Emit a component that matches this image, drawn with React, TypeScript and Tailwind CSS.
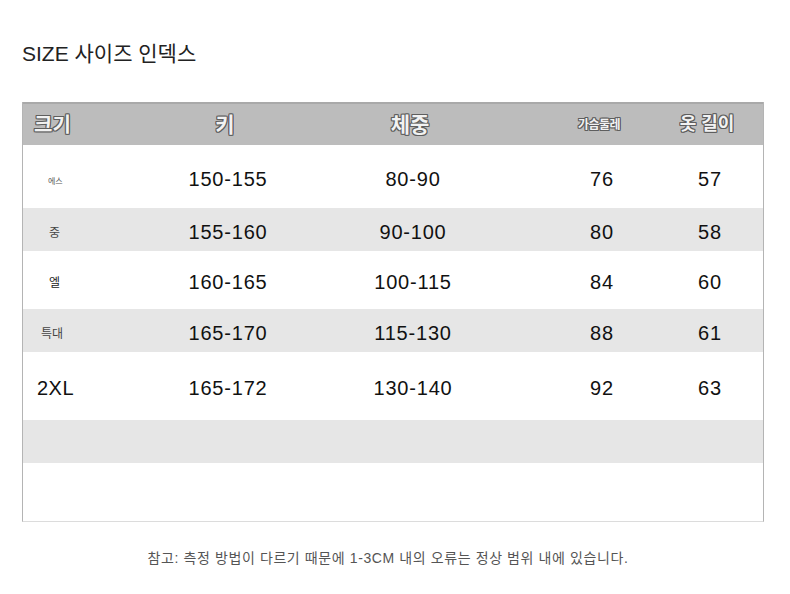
import React from "react";

const font = "font-['Liberation_Sans','Noto_Sans_CJK_KR',sans-serif]";
const outline =
  "text-[#f2f2f2] font-bold [text-shadow:1px_0_0_#5e5e5e,-1px_0_0_#5e5e5e,0_1px_0_#5e5e5e,0_-1px_0_#5e5e5e,1px_1px_0_#5e5e5e,-1px_-1px_0_#5e5e5e,1px_-1px_0_#5e5e5e,-1px_1px_0_#5e5e5e]";

type Row = {
  size: React.ReactNode;
  h: string;
  bg: string;
  vals: string[];
};

const rows: Row[] = [
  { size: <span className="pl-[25px] text-[8px] text-[#555]">에스</span>, h: "h-[63px]", bg: "bg-white", vals: ["150-155", "80-90", "76", "57"] },
  { size: <span className="pl-[26px] text-[12px] text-[#444]">중</span>, h: "h-[43px]", bg: "bg-[#e6e6e6]", vals: ["155-160", "90-100", "80", "58"] },
  { size: <span className="pl-[26px] text-[12px] text-[#222]">엘</span>, h: "h-[58px]", bg: "bg-white", vals: ["160-165", "100-115", "84", "60"] },
  { size: <span className="pl-[18px] text-[12px] text-[#444]">특대</span>, h: "h-[43px]", bg: "bg-[#e6e6e6]", vals: ["165-170", "115-130", "88", "61"] },
  { size: <span className="pl-[14px] text-[20px] tracking-[0.5px] text-[#111]">2XL</span>, h: "h-[68px]", bg: "bg-white", vals: ["165-172", "130-140", "92", "63"] },
];

function Cells({ vals }: { vals: string[] }) {
  return (
    <>
      <div className="w-[170px] text-center text-[20px] tracking-[0.8px] text-[#111]">{vals[0]}</div>
      <div className="w-[200px] text-center text-[20px] tracking-[0.8px] text-[#111]">{vals[1]}</div>
      <div className="w-[30px]" />
      <div className="w-[118px] text-center text-[20px] tracking-[0.8px] text-[#111]">{vals[2]}</div>
      <div className="w-[98px] text-center text-[20px] tracking-[0.8px] text-[#111]">{vals[3]}</div>
    </>
  );
}

export default function App() {
  return (
    <div className={`w-[790px] h-[594px] bg-white ${font}`}>
      <div className="pl-[22px] pt-[39px] text-[21px] leading-[30px] text-[#222]">SIZE 사이즈 인덱스</div>

      <div className="ml-[22px] mt-[33px] w-[742px] border-x border-[#b4b4b4] border-b-[#dcdcdc] border-b">
        <div className="flex h-[43px] items-center border-t-2 border-[#a9a9a9] bg-[#bcbcbc]">
          <div className={`w-[120px] pl-[11px] text-[20px] ${outline}`}>크기</div>
          <div className={`w-[170px] pr-[6px] text-center text-[21px] ${outline}`}>키</div>
          <div className={`w-[200px] pr-[6px] text-center text-[21px] ${outline}`}>체중</div>
          <div className="w-[30px]" />
          <div className={`w-[118px] pr-[6px] text-center text-[12px] tracking-[-0.5px] ${outline}`}>가슴둘레</div>
          <div className={`w-[98px] pr-[6px] text-center text-[18px] ${outline}`}>옷 길이</div>
        </div>

        {rows.map((r, i) => (
          <div key={i} className={`flex items-center pt-[4px] ${r.h} ${r.bg}`}>
            <div className="w-[120px]">{r.size}</div>
            <Cells vals={r.vals} />
          </div>
        ))}
        <div className="h-[43px] bg-[#e6e6e6]" />
        <div className="h-[58px] bg-white" />
      </div>

      <div className="mt-[27px] pr-[14px] text-center text-[14px] leading-[18px] tracking-[0.6px] text-[#555]">
        참고: 측정 방법이 다르기 때문에 1-3CM 내의 오류는 정상 범위 내에 있습니다.
      </div>
    </div>
  );
}
